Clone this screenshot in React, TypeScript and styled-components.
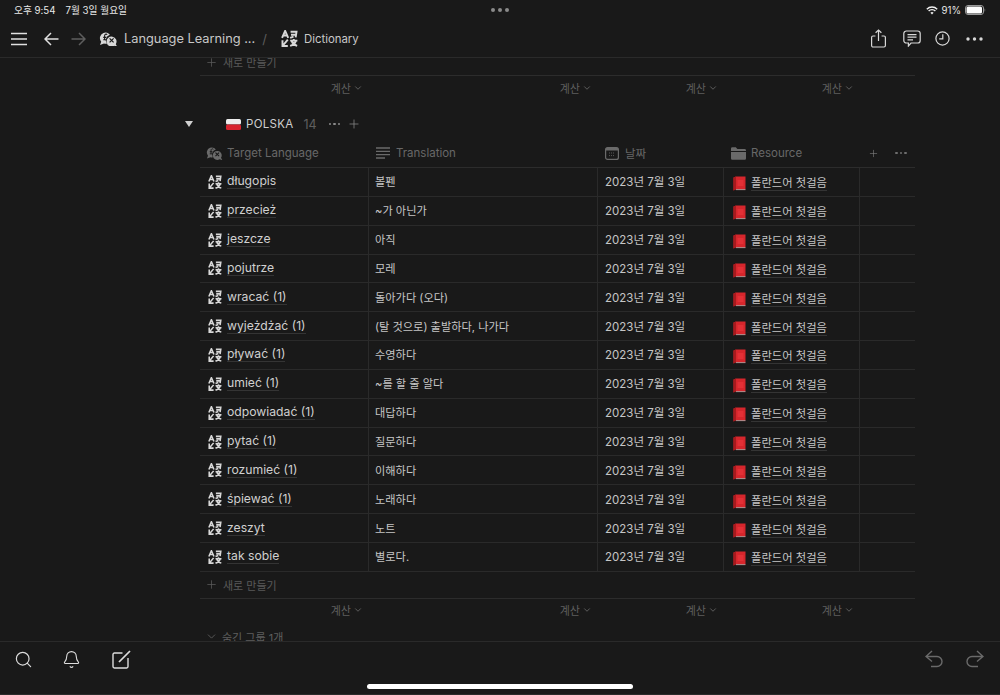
import React from "react";
import styled, { createGlobalStyle } from "styled-components";
import { ChevronDown, Plus, Search, Bell } from "lucide-react";

const FONT = `Inter, "Noto Sans CJK KR", "Noto Sans", sans-serif`;

const Global = createGlobalStyle`
  html, body { margin: 0; padding: 0; background: #191919; }
  body { font-family: ${FONT}; overflow: hidden; }
  * { box-sizing: border-box; }
`;

const Page = styled.div`
  position: relative;
  width: 1000px;
  height: 695px;
  display: flex;
  flex-direction: column;
  background: #191919;
  color: #d4d4d4;
  overflow: hidden;
`;

const StatusBar = styled.div`
  height: 20px;
  flex: none;
  padding: 0 14px;
  display: grid;
  grid-template-columns: 1fr auto 1fr;
  align-items: center;
  font-size: 9.7px;
  color: #e8e8e8;
`;
const StatusLeft = styled.div`
  display: flex;
  gap: 10px;
`;
const StatusRight = styled.div`
  display: flex;
  justify-content: flex-end;
  align-items: center;
  gap: 4px;
`;
const TopDots = styled.div`
  display: flex;
  gap: 3px;
`;
const TopDot = styled.span`
  width: 4px;
  height: 4px;
  border-radius: 50%;
  background: #8a8a8a;
`;

const NavBar = styled.div`
  height: 38px;
  flex: none;
  display: flex;
  align-items: center;
  padding: 0 17px 0 11px;
  border-bottom: 1px solid #2a2a2a;
`;
const Crumb = styled.span<{ $size: number; $ml?: number }>`
  font-size: ${(p) => p.$size}px;
  margin-left: ${(p) => p.$ml ?? 0}px;
  color: #c8c8c8;
  white-space: nowrap;
`;
const CrumbSlash = styled.span`
  font-size: 13px;
  color: #5c5c5c;
  margin: 0 14px 0 7px;
`;
const NavRight = styled.div`
  margin-left: auto;
  display: flex;
  align-items: center;
`;
const NavIcon = styled.svg<{ $ml?: number; $mr?: number }>`
  display: block;
  flex: none;
  margin-left: ${(p) => p.$ml ?? 0}px;
  margin-right: ${(p) => p.$mr ?? 0}px;
`;

const Content = styled.div`
  flex: 1;
  min-height: 0;
  overflow: hidden;
  padding-left: 200px;
`;
const Board = styled.div`
  width: 715px;
  margin-top: -9px;
`;
const NewRow = styled.div`
  height: 27px;
  display: flex;
  align-items: center;
  gap: 5px;
  padding-left: 5px;
  font-size: 11px;
  color: #5a5a5a;
  border-bottom: 1px solid #2c2c2c;
`;
const cols = "169px 229px 126px 136px 55px";
const CalcRow = styled.div`
  height: 25px;
  padding-bottom: 2px;
  display: grid;
  grid-template-columns: ${cols};
`;
const CalcCell = styled.div`
  display: flex;
  justify-content: flex-end;
  align-items: center;
  gap: 2px;
  padding-right: 6px;
  font-size: 11px;
  color: #5f5f5f;
`;
const GroupRow = styled.div`
  height: 36px;
  margin: 5px 0 0 -15px;
  display: flex;
  align-items: center;
  font-size: 11.5px;
  color: #cfcfcf;
`;
const Triangle = styled.span`
  width: 0;
  height: 0;
  border-left: 4px solid transparent;
  border-right: 4px solid transparent;
  border-top: 6px solid #d0d0d0;
  margin-left: 0;
  margin-right: 33px;
`;
const GroupName = styled.span`
  margin-left: 5px;
  letter-spacing: 0.3px;
`;
const GroupCount = styled.span`
  margin-left: 10px;
  font-size: 12.5px;
  color: #5f5f5f;
`;
const DotRow = styled.span<{ $ml: number; $color: string }>`
  display: inline-flex;
  gap: 2px;
  margin-left: ${(p) => p.$ml}px;
  & > i {
    width: 2.5px;
    height: 2.5px;
    border-radius: 50%;
    background: ${(p) => p.$color};
  }
`;
const HeadRow = styled.div`
  height: 26px;
  padding-bottom: 3px;
  display: grid;
  grid-template-columns: ${cols};
  border-bottom: 1px solid #2c2c2c;
`;
const HeadCell = styled.div<{ $pl: number }>`
  display: flex;
  align-items: center;
  gap: 5px;
  padding-left: ${(p) => p.$pl}px;
  font-size: 11.5px;
  color: #686868;
  white-space: nowrap;
`;
const HeadActions = styled.div`
  display: flex;
  align-items: center;
  padding-left: 8px;
  gap: 16px;
`;
const Row = styled.div`
  height: 28.85px;
  display: grid;
  grid-template-columns: ${cols};
  border-bottom: 1px solid #2a2a2a;
`;
const Cell = styled.div<{ $pl: number; $size?: number; $last?: boolean }>`
  display: flex;
  align-items: center;
  padding-left: ${(p) => p.$pl}px;
  padding-bottom: 1px;
  font-size: ${(p) => p.$size ?? 11.2}px;
  color: #c6c6c6;
  white-space: nowrap;
  border-right: ${(p) => (p.$last ? "none" : "1px solid #2a2a2a")};
`;
const TitleCell = styled(Cell)`
  gap: 5px;
  padding-bottom: 0;
`;
const TitleText = styled.span`
  font-size: 12.2px;
  color: #d0d0d0;
  border-bottom: 1px solid #343434;
  line-height: 14px;
`;
const RelationCell = styled(Cell)`
  gap: 5px;
  padding-bottom: 0;
  padding-top: 4px;
`;
const RelationText = styled.span`
  border-bottom: 1px solid #343434;
  line-height: 14px;
  font-size: 11.3px;
`;
const HiddenRow = styled.div`
  height: 26px;
  display: flex;
  align-items: center;
  gap: 4px;
  padding-left: 5px;
  font-size: 11px;
  color: #5f5f5f;
`;
const BottomBar = styled.div`
  height: 54px;
  flex: none;
  display: flex;
  align-items: flex-start;
  padding: 8px 16px 0 14px;
  border-top: 1px solid #2a2a2a;
  border-bottom: 1px solid #2a2a2a;
`;
const BottomRight = styled.div`
  margin-left: auto;
  display: flex;
  align-items: center;
  gap: 23px;
`;
const HomeIndicator = styled.div`
  position: absolute;
  left: 367px;
  top: 684px;
  width: 266px;
  height: 5px;
  border-radius: 3px;
  background: #fff;
`;

const TranslateIcon = ({ size = 15, color = "#d8d8d8", mr }: { size?: number; color?: string; mr?: number }) => (
  <NavIcon $mr={mr} width={size} height={size} viewBox="0 0 16 16" fill="none" stroke={color} strokeWidth="1.8">
    <path d="M1 7.4 3.9 .8l2.9 6.6M2.2 5.2h3.4" />
    <path d="M9 1.6h5.6L13.8 7M9.4 4.4h4.8M8.6 7.4l3.2-1.2" />
    <path d="M6.4 9 1.8 14.6M1.4 9.6v5.4h5" />
    <path d="M8.6 10h6.8M12 8.4V10M10 10.2c.8 2.4 2.8 4 5.2 4.8M14 10.2c-.8 2.4-2.8 4-5.4 4.8" />
  </NavIcon>
);

const SpeechIcon = ({ w = 19, color = "#d8d8d8", hole = "#191919" }: { w?: number; color?: string; hole?: string }) => (
  <NavIcon width={w} height={w * 0.84} viewBox="0 0 19 16" fill="none">
    <path d="M1 14l1.2-3.2A5.6 5.6 0 1 1 5 12.6Z" fill={color} />
    <path d="M8.2 3.6c-1-.9-2.8-.3-2.6 1.6v3.4M4.2 6.4h3M4.2 8.8h4.6" stroke={hole} strokeWidth="1.1" />
    <circle cx="12.6" cy="9.4" r="5.8" fill={hole} />
    <path d="M18.4 16l-1.6-2.8a5 5 0 1 0-1.6 1.6Z" fill={color} />
    <path d="M10.6 7.4l4 4M14.6 7.4l-4 4" stroke={hole} strokeWidth="1.2" />
  </NavIcon>
);

const BookIcon = () => (
  <NavIcon width={13} height={15} viewBox="0 0 13 15">
    <path d="M.5 1.4 3 .4h9.5v12.8H3L.5 14.6Z" fill="#d6262c" />
    <path d="M.5 1.4 3 .4v12.8L.5 14.6Z" fill="#a81a1e" />
    <path d="M3 13.2h9.5v.9H3Z" fill="#c9a0a0" />
    <path d="M4.5 4h6v6h-6Z" fill="#e8343a" opacity=".7" />
  </NavIcon>
);

const FlagIcon = () => (
  <NavIcon width={15} height={11} viewBox="0 0 15 11">
    <rect width="15" height="5.5" y="0" rx="1.5" fill="#eeeeee" />
    <rect width="15" height="5.5" y="5.5" rx="1.5" fill="#d8242f" />
  </NavIcon>
);

const Dots = ({ ml = 0, color = "#8a8a8a" }: { ml?: number; color?: string }) => (
  <DotRow $ml={ml} $color={color}>
    <i />
    <i />
    <i />
  </DotRow>
);

const rows: [string, string][] = [
  ["długopis", "볼펜"],
  ["przecież", "~가 아닌가"],
  ["jeszcze", "아직"],
  ["pojutrze", "모레"],
  ["wracać (1)", "돌아가다 (오다)"],
  ["wyjeżdżać (1)", "(탈 것으로) 출발하다, 나가다"],
  ["pływać (1)", "수영하다"],
  ["umieć (1)", "~를 할 줄 알다"],
  ["odpowiadać (1)", "대답하다"],
  ["pytać (1)", "질문하다"],
  ["rozumieć (1)", "이해하다"],
  ["śpiewać (1)", "노래하다"],
  ["zeszyt", "노트"],
  ["tak sobie", "별로다."],
];

const NewLine = () => (
  <NewRow>
    <Plus size={13} strokeWidth={1.4} color="#5a5a5a" />
    새로 만들기
  </NewRow>
);

const Calc = () => (
  <CalcRow>
    {[0, 1, 2, 3].map((i) => (
      <CalcCell key={i}>
        계산
        <ChevronDown size={10} strokeWidth={2} color="#6a6a6a" />
      </CalcCell>
    ))}
  </CalcRow>
);

export default function App() {
  return (
    <Page>
      <Global />
      <StatusBar>
        <StatusLeft>
          <span>오후 9:54</span>
          <span>7월 3일 월요일</span>
        </StatusLeft>
        <TopDots>
          <TopDot />
          <TopDot />
          <TopDot />
        </TopDots>
        <StatusRight>
          <NavIcon width={12} height={9} viewBox="0 0 12 9" fill="none" stroke="#f0f0f0" strokeWidth="1.4">
            <path d="M.8 3.2a7.4 7.4 0 0 1 10.4 0M2.6 5a4.8 4.8 0 0 1 6.8 0" />
            <path d="M4.4 6.8a2.3 2.3 0 0 1 3.2 0L6 8.6Z" fill="#f0f0f0" stroke="none" />
          </NavIcon>
          <span>91%</span>
          <NavIcon width={21} height={10} viewBox="0 0 21 10" fill="none">
            <rect x=".5" y=".5" width="18" height="9" rx="2.5" stroke="#9a9a9a" />
            <rect x="1.5" y="1.5" width="15.5" height="7" rx="1.5" fill="#fff" />
            <path d="M19.6 3.4c.8.2.8 3 0 3.2Z" fill="#9a9a9a" />
          </NavIcon>
        </StatusRight>
      </StatusBar>

      <NavBar>
        <NavIcon width={16} height={14} viewBox="0 0 16 14" stroke="#e0e0e0" strokeWidth="1.5" $mr={17}>
          <path d="M0 1.5h16M0 7h16M0 12.5h16" />
        </NavIcon>
        <NavIcon width={15} height={14} viewBox="0 0 15 14" fill="none" stroke="#e0e0e0" strokeWidth="1.5" $mr={12}>
          <path d="M14.5 7H1M7 1 1 7l6 6" />
        </NavIcon>
        <NavIcon width={15} height={14} viewBox="0 0 15 14" fill="none" stroke="#5e5e5e" strokeWidth="1.5" $mr={13}>
          <path d="M.5 7H14M8 1l6 6-6 6" />
        </NavIcon>
        <SpeechIcon />
        <Crumb $size={12.8} $ml={6}>Language Learning ...</Crumb>
        <CrumbSlash>/</CrumbSlash>
        <TranslateIcon size={17} mr={6} />
        <Crumb $size={11.4}>Dictionary</Crumb>
        <NavRight>
          <NavIcon width={15} height={19} viewBox="0 0 15 19" fill="none" stroke="#d8d8d8" strokeWidth="1.2" $mr={17}>
            <path d="M4.4 7H2a1.4 1.4 0 0 0-1.4 1.4v8.2A1.4 1.4 0 0 0 2 18h11a1.4 1.4 0 0 0 1.4-1.4V8.4A1.4 1.4 0 0 0 13 7h-2.4" />
            <path d="M7.5 12V1M4.6 3.8 7.5 1l2.9 2.8" />
          </NavIcon>
          <NavIcon width={18} height={17} viewBox="0 0 18 17" fill="none" stroke="#d8d8d8" strokeWidth="1.2" $mr={14}>
            <path d="M3.4 1h11.2A2.6 2.6 0 0 1 17.2 3.6v6.8A2.6 2.6 0 0 1 14.6 13H8l-2.6 3v-3h-2A2.6 2.6 0 0 1 .8 10.4V3.6A2.6 2.6 0 0 1 3.4 1Z" />
            <path d="M4.5 4.6h9M4.5 7.2h9M4.5 9.8h5.5" />
          </NavIcon>
          <NavIcon width={15} height={15} viewBox="0 0 15 15" fill="none" stroke="#d8d8d8" strokeWidth="1.2" $mr={16}>
            <circle cx="7.5" cy="7.5" r="6.6" />
            <path d="M7.8 3.2v4.6H4.2" />
          </NavIcon>
          <NavIcon width={17} height={4} viewBox="0 0 17 4" fill="#d8d8d8">
            <circle cx="2" cy="2" r="1.7" />
            <circle cx="8.5" cy="2" r="1.7" />
            <circle cx="15" cy="2" r="1.7" />
          </NavIcon>
        </NavRight>
      </NavBar>

      <Content>
        <Board>
          <NewLine />
          <Calc />
          <GroupRow>
            <Triangle />
            <FlagIcon />
            <GroupName>POLSKA</GroupName>
            <GroupCount>14</GroupCount>
            <Dots ml={12} />
            <Plus size={14} strokeWidth={1.3} color="#8a8a8a" style={{ marginLeft: 7 }} />
          </GroupRow>
          <HeadRow>
            <HeadCell $pl={6}>
              <SpeechIcon w={17} color="#6a6a6a" />
              <span style={{ marginLeft: -1 }}>Target Language</span>
            </HeadCell>
            <HeadCell $pl={7}>
              <NavIcon width={14} height={12} viewBox="0 0 14 12" stroke="#6a6a6a" strokeWidth="1.3" $mr={1}>
                <path d="M0 1h14M0 4.3h14M0 7.6h14M0 11h9" />
              </NavIcon>
              Translation
            </HeadCell>
            <HeadCell $pl={7}>
              <NavIcon width={14} height={13} viewBox="0 0 14 13" fill="none" $mr={1}>
                <rect x=".6" y=".6" width="12.8" height="11.8" rx="2" stroke="#6a6a6a" strokeWidth="1.2" />
                <path d="M.6 3.4V2.6a2 2 0 0 1 2-2h8.8a2 2 0 0 1 2 2v.8Z" fill="#6a6a6a" />
                <path d="M4 6h6M4 8.6h6" stroke="#5a5a5a" strokeDasharray="1 1" />
              </NavIcon>
              날짜
            </HeadCell>
            <HeadCell $pl={7}>
              <NavIcon width={15} height={13} viewBox="0 0 15 13">
                <path d="M0 1.6A1.4 1.4 0 0 1 1.4.2h3.4L6.4 2h7.2A1.4 1.4 0 0 1 15 3.4V4H0Z" fill="#6a6a6a" />
                <path d="M0 5h15v6.6a1.2 1.2 0 0 1-1.2 1.2H1.2A1.2 1.2 0 0 1 0 11.6Z" fill="#6a6a6a" />
              </NavIcon>
              Resource
            </HeadCell>
            <HeadActions>
              <Plus size={11} strokeWidth={1.3} color="#808080" />
              <Dots color="#6e6e6e" />
            </HeadActions>
          </HeadRow>
          {rows.map(([title, translation]) => (
            <Row key={title}>
              <TitleCell $pl={8}>
                <TranslateIcon size={14} />
                <TitleText>{title}</TitleText>
              </TitleCell>
              <Cell $pl={6}>{translation}</Cell>
              <Cell $pl={7} $size={11.5}>2023년 7월 3일</Cell>
              <RelationCell $pl={9}>
                <BookIcon />
                <RelationText>폴란드어 첫걸음</RelationText>
              </RelationCell>
              <Cell $pl={0} $last />
            </Row>
          ))}
          <NewLine />
          <Calc />
          <HiddenRow>
            <ChevronDown size={13} strokeWidth={1.4} color="#6a6a6a" />
            숨긴 그룹 1개
          </HiddenRow>
        </Board>
      </Content>

      <BottomBar>
        <Search size={19} strokeWidth={1.5} color="#dcdcdc" style={{ marginRight: 29 }} />
        <Bell size={19} strokeWidth={1.4} color="#dcdcdc" style={{ marginRight: 30 }} />
        <NavIcon width={19} height={19} $ml={1} viewBox="0 0 19 19" fill="none" stroke="#dcdcdc" strokeWidth="1.4">
          <path d="M10.5 3H2.4A1.4 1.4 0 0 0 1 4.4v12.2A1.4 1.4 0 0 0 2.4 18h12.2a1.4 1.4 0 0 0 1.4-1.4V8" />
          <path d="M7 12 18 1" strokeWidth="1.7" />
        </NavIcon>
        <BottomRight>
          <NavIcon width={18} height={18} viewBox="0 0 18 18" fill="none" stroke="#6a6a6a" strokeWidth="1.4">
            <path d="M7 1 1 6.5 7 11.5M1 6.5h11a5 5 0 0 1 0 10H6" />
          </NavIcon>
          <NavIcon width={18} height={18} viewBox="0 0 18 18" fill="none" stroke="#6a6a6a" strokeWidth="1.4">
            <path d="M11 1l6 5.5-6 5M17 6.5H6a5 5 0 0 0 0 10h6" />
          </NavIcon>
        </BottomRight>
      </BottomBar>
      <HomeIndicator />
    </Page>
  );
}
